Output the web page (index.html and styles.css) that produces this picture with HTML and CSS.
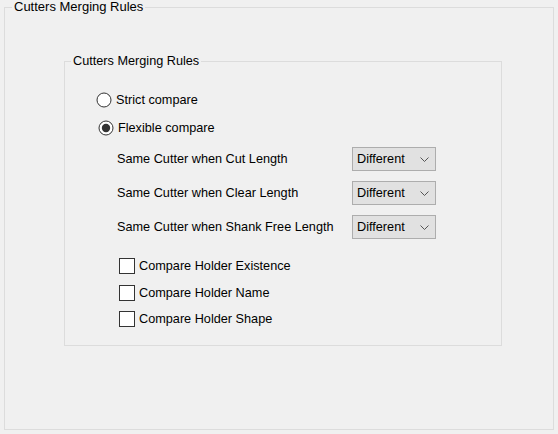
FILE: index.html
```html
<!DOCTYPE html>
<html>
<head>
<meta charset="utf-8">
<link rel="stylesheet" href="styles.css">
</head>
<body>
<div class="group outer">
  <div class="group-title">Cutters Merging Rules</div>
  <div class="group inner">
    <div class="group-title">Cutters Merging Rules</div>
    <div class="radio-row strict">
      <svg class="radio" width="16" height="16" viewBox="0 0 16 16"><circle cx="8" cy="8" r="7" fill="#fff" stroke="#333" stroke-width="1"/></svg>
      <span>Strict compare</span>
    </div>
    <div class="radio-row flexible">
      <svg class="radio" width="16" height="16" viewBox="0 0 16 16"><circle cx="8" cy="8" r="7" fill="#fff" stroke="#333" stroke-width="1"/><circle cx="8" cy="8" r="4.2" fill="#333"/></svg>
      <span>Flexible compare</span>
    </div>
    <div class="select-rows">
      <div class="select-row">
        <span class="label">Same Cutter when Cut Length</span>
        <div class="combo"><span>Different</span><svg width="9" height="5" viewBox="0 0 9 5"><path d="M0.5 0.5 L4.5 4.5 L8.5 0.5" fill="none" stroke="#555" stroke-width="1"/></svg></div>
      </div>
      <div class="select-row">
        <span class="label">Same Cutter when Clear Length</span>
        <div class="combo"><span>Different</span><svg width="9" height="5" viewBox="0 0 9 5"><path d="M0.5 0.5 L4.5 4.5 L8.5 0.5" fill="none" stroke="#555" stroke-width="1"/></svg></div>
      </div>
      <div class="select-row">
        <span class="label">Same Cutter when Shank Free Length</span>
        <div class="combo"><span>Different</span><svg width="9" height="5" viewBox="0 0 9 5"><path d="M0.5 0.5 L4.5 4.5 L8.5 0.5" fill="none" stroke="#555" stroke-width="1"/></svg></div>
      </div>
    </div>
    <div class="checks">
      <div class="check-row"><span class="box"></span><span>Compare Holder Existence</span></div>
      <div class="check-row"><span class="box"></span><span>Compare Holder Name</span></div>
      <div class="check-row"><span class="box"></span><span>Compare Holder Shape</span></div>
    </div>
  </div>
</div>
</body>
</html>
```

FILE: styles.css
```css
* { box-sizing: border-box; }
html, body { margin: 0; padding: 0; }
body {
  background: #f0f0f0;
  font-family: "Liberation Sans", Arial, sans-serif;
  font-size: 12.7px;
  color: #000;
  width: 558px;
  height: 434px;
  overflow: hidden;
}
.group {
  border: 1px solid #dcdcdc;
}
.group-title {
  background: #f0f0f0;
  width: fit-content;
  line-height: 14px;
  height: 14px;
  padding: 0 2px;
  margin-top: -8px;
  white-space: nowrap;
}
.outer {
  margin: 7px 4px 4px 4px;
  height: 423px;
}
.outer > .group-title {
  margin-left: 7px;
  font-size: 13px;
}
.inner {
  margin: 47px 0 0 59px;
  width: 438px;
  height: 285px;
}
.inner > .group-title {
  margin-left: 6px;
}
.radio-row {
  display: flex;
  align-items: center;
  height: 16px;
  gap: 4px;
}
.radio { display: block; flex: none; }
.strict { margin: 24px 0 0 31px; }
.flexible { margin: 12px 0 0 33px; }
.select-rows {
  margin: 11px 0 0 52px;
  display: flex;
  flex-direction: column;
  gap: 10px;
}
.select-row {
  display: flex;
  align-items: center;
  height: 24px;
}
.label {
  width: 235px;
  flex: none;
  white-space: nowrap;
}
.combo {
  width: 84px;
  height: 24px;
  background: #e1e1e1;
  border: 1px solid #adadad;
  display: flex;
  align-items: center;
  justify-content: space-between;
  padding: 0 6px 0 4px;
}
.combo svg { display: block; }
.checks {
  margin: 19px 0 0 54px;
  display: flex;
  flex-direction: column;
  gap: 10.5px;
}
.check-row {
  display: flex;
  align-items: center;
  height: 16px;
  gap: 4px;
}
.box {
  width: 16px;
  height: 16px;
  background: #fff;
  border: 1px solid #333;
  flex: none;
}
```
